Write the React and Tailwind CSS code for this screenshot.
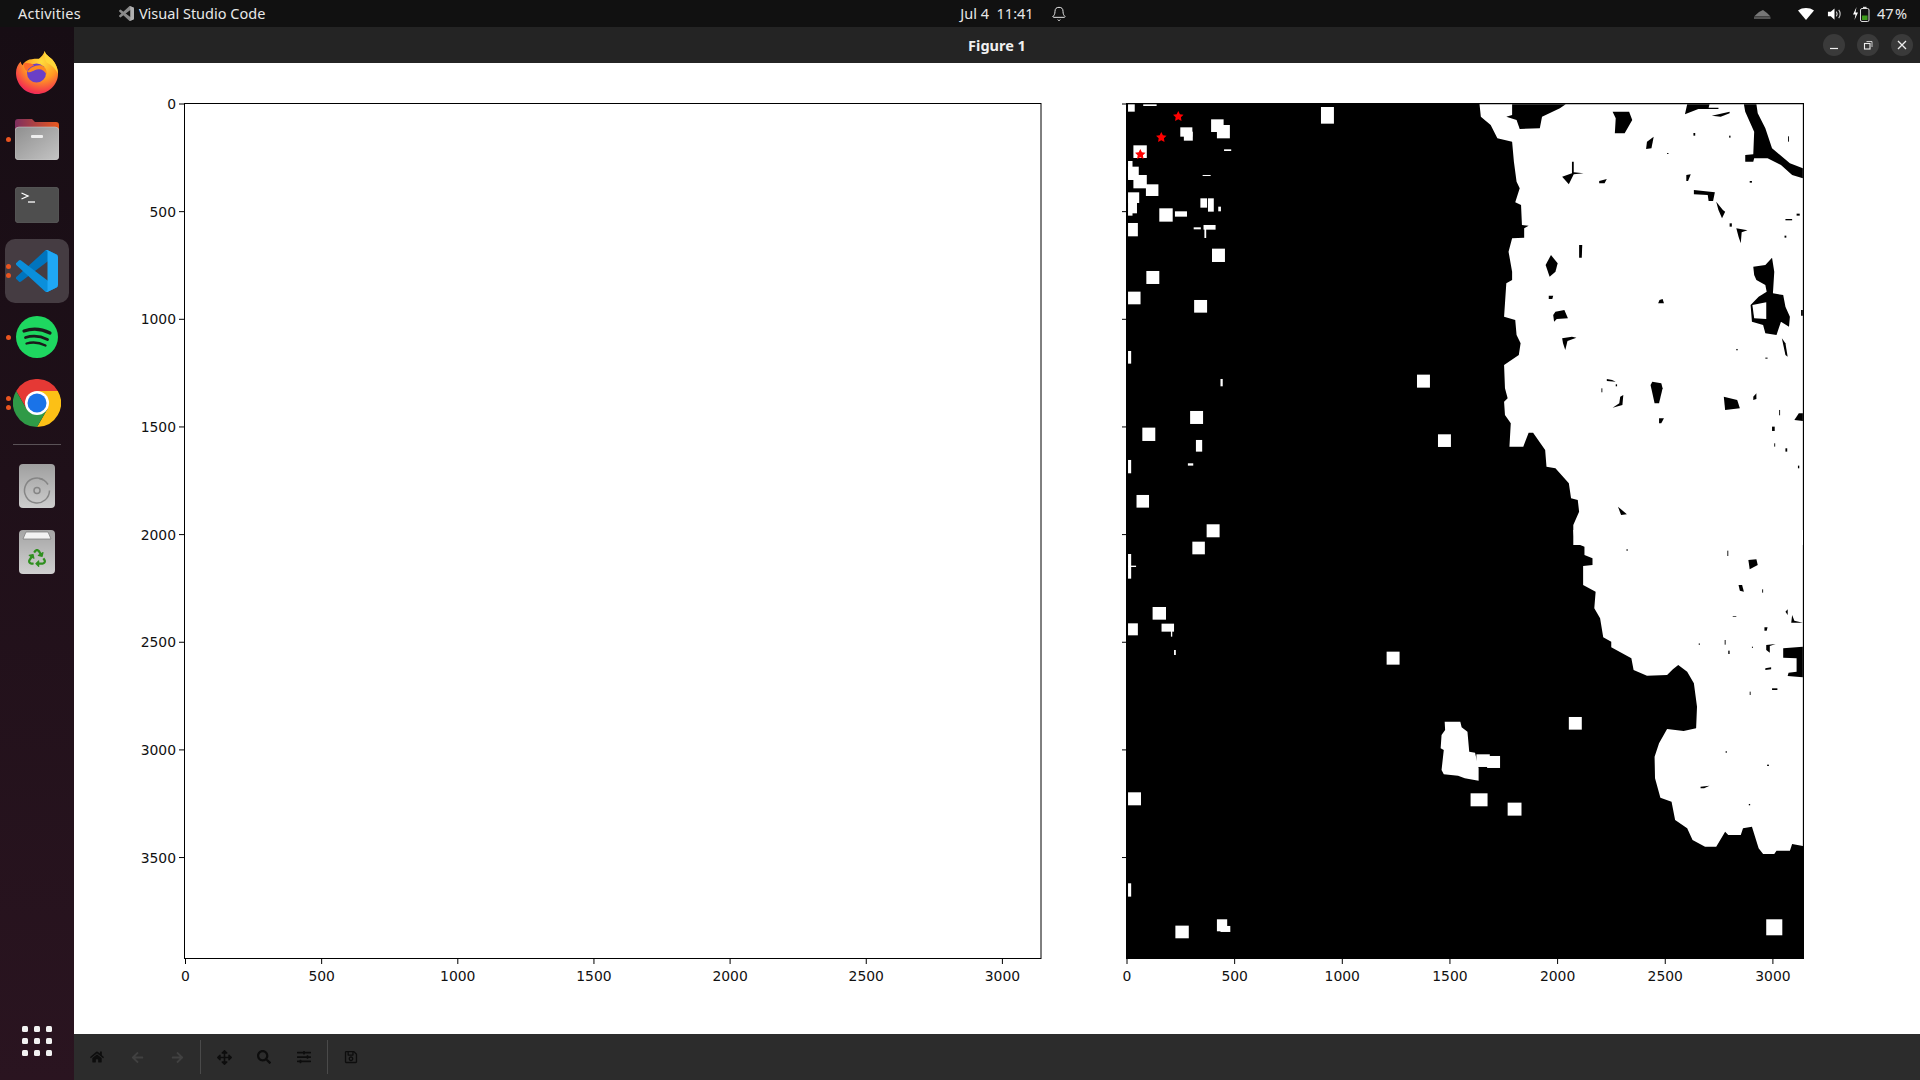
import { Bell } from "lucide-react";
import { FaArrowLeft, FaArrowRight, FaArrowsAlt, FaHome, FaRecycle, FaRegSave, FaSearch, FaSlidersH } from "react-icons/fa";

const yTicks = [0, 500, 1000, 1500, 2000, 2500, 3000, 3500];
const xTicks = [0, 500, 1000, 1500, 2000, 2500, 3000];

// upper half of the mask, traced in zoom coords
const upperLand = "805,28 808,65 830,90 845,130 878,140 882,200 888,260 895,280 885,322 898,330 900,390 915,392 905,400 905,428 878,430 870,470 878,530 878,555 865,565 860,665 885,675 888,720 897,745 893,780 860,810 862,880 868,910 860,920 862,960 875,985 872,1055 903,1055 915,1013 925,1013 952,1065 955,1115 975,1120 1005,1165 1010,1210 1025,1215 1028,1250 1015,1290 1015,1350 1529,1350 1529,28";
const upperHoles = [
  "878,28 998,28 985,40 945,65 940,100 895,102 888,75 865,65 878,60",
  "1103,50 1140,50 1147,75 1130,115 1108,115 1110,70",
  "1270,28 1320,28 1318,38 1340,38 1340,42 1295,42 1265,58",
  "1325,62 1365,50 1365,55 1345,65",
  "1397,28 1425,28 1428,55 1445,100 1460,160 1500,205 1529,220 1529,250 1505,240 1480,210 1450,190 1420,190 1418,200 1400,200 1400,180 1418,178 1420,110 1400,50",
  "1180,140 1195,125 1190,160 1178,162",
  "1012,200 1016,200 1016,232 1038,235 1016,238 1005,268 990,245 1012,235",
  "1073,258 1090,252 1085,265 1073,265",
  "1268,240 1278,238 1272,258 1268,258",
  "1285,285 1332,292 1328,318 1318,318 1316,300 1285,298",
  "1335,320 1350,345 1355,350 1348,370 1340,345",
  "1380,400 1405,406 1392,412 1390,445 1385,425",
  "1028,450 1035,450 1034,488 1028,488",
  "965,480 980,505 975,530 962,545 953,510",
  "960,602 970,602 968,612 960,612",
  "1208,615 1215,612 1218,625 1205,625",
  "975,650 995,645 1003,670 978,672 972,680 970,660",
  "990,730 1012,725 1022,728 1002,738 997,765 992,745",
  "1482,730 1490,745 1495,785 1490,780",
  "1418,515 1445,510 1460,488 1465,530 1462,595 1485,600 1490,635 1500,665 1498,695 1480,680 1470,720 1445,715 1440,690 1415,680 1412,630 1430,605 1448,590 1445,570 1425,555 1420,540",
  "1525,645 1529,645 1529,662 1525,662",
  "1192,860 1212,865 1215,880 1207,925 1197,925 1188,870",
  "1352,905 1382,915 1388,940 1355,945",
  "1418,905 1425,895 1425,912 1418,915",
  "1510,975 1520,955 1529,955 1529,978",
  "1207,970 1218,970 1212,985 1207,985",
  "1120,905 1127,900 1125,930 1103,938 1118,925",
  "1090,852 1102,855 1110,860 1090,858",
  "1115,1235 1135,1258 1122,1260",
  "1445,1305 1462,1310 1460,1328 1450,1325",
  "1490,372 1505,372 1505,376 1490,376",
  "1515,356 1522,356 1522,362 1515,362",
  "1365,385 1370,385 1370,395 1365,395",
  "1460,995 1466,995 1466,1008 1460,1008",
  "1490,1060 1494,1060 1494,1070 1490,1070",
];
const upperSpecks = [
  [1284, 114, 4, 8], [1364, 122, 3, 6], [1496, 124, 2, 16], [1225, 174, 3, 3], [1410, 258, 5, 5], [1380, 762, 3, 4], [1445, 788, 5, 3],
  [1078, 880, 2, 12], [1110, 868, 3, 6], [1476, 945, 2, 16], [1465, 1045, 2, 10], [1518, 1112, 3, 8], [1488, 422, 4, 6],
];
const upperBlocks = [
  [18, 28, 15, 22], [52, 28, 30, 5], [450, 36, 29, 50], [204, 73, 28, 38], [217, 90, 29, 40], [135, 97, 27, 28], [143, 110, 20, 27],
  [30, 151, 30, 38], [233, 163, 16, 5], [185, 240, 18, 3], [18, 198, 10, 50], [18, 215, 24, 40], [30, 240, 30, 40], [58, 268, 28, 35],
  [18, 292, 25, 32], [18, 310, 20, 45], [18, 350, 10, 12], [180, 310, 15, 28], [197, 310, 13, 40], [220, 335, 6, 14], [88, 340, 30, 40],
  [123, 349, 27, 16], [165, 397, 16, 6], [187, 390, 27, 14], [189, 400, 4, 29], [18, 384, 22, 40], [206, 461, 29, 40], [59, 528, 29, 39],
  [18, 590, 28, 38], [166, 615, 29, 38], [18, 768, 7, 38], [225, 852, 5, 22], [665, 839, 29, 39], [157, 948, 29, 39], [50, 998, 29, 40],
  [712, 1018, 29, 38], [170, 1035, 14, 35], [152, 1105, 12, 7], [18, 1095, 7, 40], [37, 1200, 28, 38], [194, 1288, 29, 39],
];

const lowerLand = "1015,0 1018,38 1040,50 1040,75 1058,85 1058,105 1037,108 1037,165 1065,185 1062,235 1075,265 1082,322 1100,335 1100,352 1145,385 1150,420 1180,437 1225,435 1238,418 1250,405 1270,425 1285,460 1292,530 1290,595 1262,603 1225,597 1207,640 1197,680 1198,745 1210,803 1235,815 1243,870 1270,895 1282,930 1310,950 1335,950 1355,905 1362,915 1390,915 1395,895 1415,890 1430,955 1440,972 1465,972 1470,962 1500,962 1505,942 1529,948 1529,0";
const lowerHoles = [
  "1407,90 1425,88 1428,105 1410,118",
  "1385,165 1393,165 1397,185 1388,182",
  "1490,245 1495,238 1495,255",
  "1505,255 1510,272 1529,278 1503,278",
  "1443,292 1450,292 1448,302 1443,302",
  "1447,345 1468,342 1455,348 1455,368 1447,360",
  "1485,355 1529,350 1529,442 1495,438 1497,428 1515,425 1515,385 1485,383",
  "1460,475 1472,475 1472,480 1460,480",
  "1300,770 1320,767 1308,775 1300,775",
  "1445,415 1458,412 1458,418 1445,420",
];
const lowerSpecks = [
  [1134, 58, 3, 4], [1360, 62, 2, 16], [1438, 178, 2, 10], [1372, 258, 8, 2], [1354, 330, 2, 14], [1362, 362, 3, 10], [1415, 350, 2, 4],
  [1296, 340, 2, 5], [1410, 485, 2, 10], [1356, 664, 3, 4], [1449, 704, 4, 4], [1408, 822, 3, 4],
];
const lowerBlob = "727,575 762,575 765,592 778,605 782,665 795,668 803,715 803,752 772,745 757,737 725,733 720,720 725,660 718,655 720,615 728,600";
const lowerBlocks = [
  [18, 72, 7, 74], [18, 107, 18, 4], [162, 35, 28, 38], [73, 231, 30, 38], [18, 280, 22, 36], [93, 281, 28, 24], [114, 300, 3, 20],
  [121, 360, 4, 15], [597, 365, 29, 39], [1005, 561, 29, 38], [798, 673, 30, 38], [822, 678, 29, 36], [785, 790, 38, 39], [868, 818, 31, 39],
  [18, 787, 29, 39], [18, 1060, 7, 40], [124, 1187, 30, 38], [217, 1168, 23, 36], [225, 1188, 22, 18], [1447, 1168, 36, 48],
];

const starPoints = (cx, cy, r) => {
  const pts = [];
  for (let i = 0; i < 10; i++) {
    const rad = i % 2 === 0 ? r : r * 0.5;
    const a = -Math.PI / 2 + (i * Math.PI) / 5;
    pts.push(`${cx + rad * Math.cos(a)},${cy + rad * Math.sin(a)}`);
  }
  return pts.join(" ");
};

function Plots() {
  return (
    <svg viewBox="74 63 1846 971" className="block w-full flex-1 bg-white" style={{ fontFamily: '"DejaVu Sans", sans-serif' }}>
      {/* left axes, empty */}
      <rect x="184.5" y="103.5" width="856.5" height="855" fill="white" stroke="black" strokeWidth="1" />
      {yTicks.map((v) => {
        const y = 104 + v * 0.2153;
        return (
          <g key={v}>
            <line x1="179" x2="184" y1={y} y2={y} stroke="black" />
            <text x="176" y={y} textAnchor="end" dominantBaseline="central" fontSize="13.9" fill="#111">{v}</text>
          </g>
        );
      })}
      {xTicks.map((v) => {
        const x = 185.5 + v * 0.2723;
        return (
          <g key={v}>
            <line x1={x} x2={x} y1="959" y2="964" stroke="black" />
            <text x={x} y="975.5" textAnchor="middle" dominantBaseline="central" fontSize="13.9" fill="#111">{v}</text>
          </g>
        );
      })}

      {/* right axes, mask */}
      <rect x="1127" y="104" width="676" height="854" fill="black" />
      <g transform="translate(1120 95) scale(0.4466 0.3333)">
        <polygon points={upperLand} fill="white" />
        {upperHoles.map((p) => <polygon key={p} points={p} fill="black" />)}
        {upperSpecks.map(([x, y, w, h]) => <rect key={`${x}-${y}`} x={x} y={y} width={w} height={h} fill="black" />)}
        <polygon points="1416,630 1447,622 1447,672 1420,670" fill="white" />
        {upperBlocks.map(([x, y, w, h]) => <rect key={`${x}-${y}`} x={x} y={y} width={w} height={h} fill="white" />)}
      </g>
      <g transform="translate(1120 530) scale(0.4466 0.3333)">
        <polygon points={lowerLand} fill="white" />
        {lowerHoles.map((p) => <polygon key={p} points={p} fill="black" />)}
        {lowerSpecks.map(([x, y, w, h]) => <rect key={`${x}-${y}`} x={x} y={y} width={w} height={h} fill="black" />)}
        <polygon points={lowerBlob} fill="white" />
        {lowerBlocks.map(([x, y, w, h]) => <rect key={`${x}-${y}`} x={x} y={y} width={w} height={h} fill="white" />)}
      </g>
      <polygon points={starPoints(1178.3, 116.5, 5.5)} fill="#ff0000" />
      <polygon points={starPoints(1161.3, 137.5, 5.5)} fill="#ff0000" />
      <polygon points={starPoints(1140.3, 154.5, 5.5)} fill="#ff0000" />
      <rect x="1126.5" y="103.5" width="677" height="855" fill="none" stroke="black" strokeWidth="1" />
      {yTicks.map((v) => {
        const y = 104 + v * 0.2153;
        return <line key={v} x1="1122" x2="1126" y1={y} y2={y} stroke="black" />;
      })}
      {xTicks.map((v) => {
        const x = 1127 + v * 0.2153;
        return (
          <g key={v}>
            <line x1={x} x2={x} y1="959" y2="964" stroke="black" />
            <text x={x} y="975.5" textAnchor="middle" dominantBaseline="central" fontSize="13.9" fill="#111">{v}</text>
          </g>
        );
      })}
    </svg>
  );
}

const VsCodeMono = () => (
  <svg viewBox="0 0 100 100" width="15" height="15" fill="#8a8a8a">
    <path d="M96.46 10.8 75.86.87a6.23 6.23 0 0 0-7.1 1.2L1.3 63.6a4.16 4.16 0 0 0 0 6.16l5.5 5a4.17 4.17 0 0 0 5.32.24L93.3 13.4a4.14 4.14 0 0 1 6.7 3.3v-.24a6.25 6.25 0 0 0-3.54-5.66Z" />
    <path d="M96.46 89.2 75.86 99.13a6.23 6.23 0 0 1-7.1-1.2L1.3 36.4a4.16 4.16 0 0 1 0-6.16l5.5-5a4.17 4.17 0 0 1 5.32-.24L93.3 86.6a4.14 4.14 0 0 0 6.7-3.3v.24a6.25 6.25 0 0 1-3.54 5.66Z" />
    <path d="M75.86 99.13a6.23 6.23 0 0 1-7.1-1.2c2.3 2.3 6.24.67 6.24-2.58V4.65c0-3.25-3.94-4.88-6.24-2.58a6.23 6.23 0 0 1 7.1-1.2l20.6 9.9A6.25 6.25 0 0 1 100 16.4v67.2a6.25 6.25 0 0 1-3.54 5.63Z" fill="#b0b0b0" />
  </svg>
);

function TopBar() {
  return (
    <div className="flex h-[27px] shrink-0 items-center bg-[#111111] text-[14.5px] text-[#e8e8e8]" style={{ fontFamily: '"Noto Sans", sans-serif' }}>
      <span className="ml-[18px] tracking-[0.25px]">Activities</span>
      <span className="ml-[38px] flex items-center gap-[5px]">
        <VsCodeMono />
        Visual Studio Code
      </span>
      <span className="ml-[695px] flex items-center">
        <span className="w-[72px] whitespace-nowrap">Jul 4&nbsp; 11:41</span>
        <Bell size={16} strokeWidth={1.5} className="ml-[19px]" />
      </span>
      <span className="ml-auto flex items-center">
        <svg viewBox="0 0 18 10" width="18" height="10">
          <path d="M1 7.5 6 3l4-2 4 3 3.5 3.5Z" fill="#777" />
          <path d="M1 8.5h16.5V9.5H1Z" fill="#999" />
        </svg>
        <svg viewBox="0 0 16 12" width="16" height="12" className="ml-[27px]">
          <path d="M0 2.5C4.5-.8 11.5-.8 16 2.5L8 12Z" fill="white" />
        </svg>
        <svg viewBox="0 0 16 14" width="15" height="14" className="ml-[13px]">
          <path d="M1 4.5h3L8 1v12L4 9.5H1Z" fill="white" />
          <path d="M10 4.5c1 1.5 1 3.500 0 5M12.500 2.500c2 2.500 2 6.500 0 9" fill="none" stroke="#ccc" strokeWidth="1.200" />
        </svg>
        <svg viewBox="0 0 20 16" width="20" height="16" className="ml-[10px]">
          <path d="M4.500 1 1 8.500h2.500L2.500 14 6 6.500H3.500Z" fill="white" />
          <rect x="8.500" y="2.500" width="8.500" height="13" rx="1.500" fill="none" stroke="#ddd" />
          <rect x="11" y="0.800" width="3.500" height="1.700" fill="#ddd" />
          <rect x="10" y="9.500" width="5.500" height="4.500" fill="#3f9b1c" />
        </svg>
        <span className="mr-[13px] ml-[5px] [word-spacing:-2.5px]">47 %</span>
      </span>
    </div>
  );
}

const Firefox = () => (
  <svg viewBox="0 0 44 46" width="42" height="44" className="relative top-[-1px]">
    <defs>
      <radialGradient id="ffBody" cx="0.6" cy="0.25" r="0.9">
        <stop offset="0" stopColor="#ffdd3c" />
        <stop offset="0.45" stopColor="#ff9a22" />
        <stop offset="0.8" stopColor="#f4334e" />
        <stop offset="1" stopColor="#e31587" />
      </radialGradient>
    </defs>
    <path d="M30 1c1 4 4 5 8 9 5 6 6 11 6 15 0 11-10 21-22 21C10 46 0 36 0 24c0-5 2-9 5-12 0 2 1 3 2 4 1-3 4-5 7-6 3-1 8-1 10-1 3-2 5-5 6-8Z" fill="url(#ffBody)" />
    <path d="M30 1c1 4 4 5 8 9 4 5 6 10 6 15-2-5-6-9-12-12-2-4-3-8-2-12Z" fill="#ffd83a" />
    <circle cx="21.500" cy="24" r="10" fill="#6a3fc7" />
    <path d="M12 23c3-6 10-7 14-7 4 1 7 5 6 10-2-5-7-7-12-5-2 1-5 3-8 2Z" fill="#ff8a1f" />
    <path d="M8 14c4-1 8 0 11 2-3 1-5 3-8 6-2-2-3-5-3-8Z" fill="#ff6a2b" />
  </svg>
);

const Files = () => (
  <svg viewBox="0 0 44 41" width="44" height="41">
    <defs>
      <linearGradient id="fBack" x1="0" x2="1">
        <stop offset="0" stopColor="#7e2f5f" />
        <stop offset="1" stopColor="#e9591f" />
      </linearGradient>
      <linearGradient id="fFront" x1="0" x2="1" y1="0" y2="1">
        <stop offset="0" stopColor="#8f8f8f" />
        <stop offset="1" stopColor="#c4c4c4" />
      </linearGradient>
    </defs>
    <path d="M0 3a3 3 0 0 1 3-3h14l3 3h21a3 3 0 0 1 3 3v14H0Z" fill="url(#fBack)" />
    <rect x="0" y="8" width="44" height="33" rx="4" fill="url(#fFront)" stroke="#d2d2d2" strokeWidth="0.500" />
    <rect x="16" y="16" width="12" height="3" rx="1" fill="#eeeeee" />
  </svg>
);

const Terminal = () => (
  <svg viewBox="0 0 44 36" width="44" height="36">
    <rect x="0" y="0" width="44" height="36" rx="4" fill="#4e4e4e" stroke="#666" strokeWidth="0.500" />
    <path d="M6.500 6 13 9l-6.500 3" fill="none" stroke="white" strokeWidth="1.300" />
    <path d="M13 15h7" stroke="white" strokeWidth="1.300" />
  </svg>
);

const VsCode = () => (
  <svg viewBox="0 0 100 100" width="42" height="42">
    <path d="M96.46 10.8 75.86.87a6.23 6.23 0 0 0-7.1 1.2L1.3 63.6a4.16 4.16 0 0 0 0 6.16l5.5 5a4.17 4.17 0 0 0 5.32.24L93.3 13.4a4.14 4.14 0 0 1 6.7 3.3v-.24a6.25 6.25 0 0 0-3.54-5.66Z" fill="#0074bd" />
    <path d="M96.46 89.2 75.86 99.13a6.23 6.23 0 0 1-7.1-1.2L1.3 36.4a4.16 4.16 0 0 1 0-6.16l5.5-5a4.17 4.17 0 0 1 5.32-.24L93.3 86.6a4.14 4.14 0 0 0 6.7-3.3v.24a6.25 6.25 0 0 1-3.54 5.66Z" fill="#0a8fdb" />
    <path d="M75.86 99.13a6.23 6.23 0 0 1-7.1-1.2c2.3 2.3 6.24.67 6.24-2.58V4.65c0-3.25-3.94-4.88-6.24-2.58a6.23 6.23 0 0 1 7.1-1.2l20.6 9.9A6.25 6.25 0 0 1 100 16.4v67.2a6.25 6.25 0 0 1-3.54 5.63Z" fill="#1fa8f5" />
  </svg>
);

const Spotify = () => (
  <svg viewBox="0 0 42 42" width="42" height="42">
    <circle cx="21" cy="21" r="21" fill="#1ed760" />
    <path d="M8 15c9-3 18-2 26 2" fill="none" stroke="#1b1b1b" strokeWidth="3.200" strokeLinecap="round" />
    <path d="M9.500 21.500c8-2.500 15-1.500 22 2" fill="none" stroke="#1b1b1b" strokeWidth="2.800" strokeLinecap="round" />
    <path d="M10.500 27.500c7-2 13-1 19 2" fill="none" stroke="#1b1b1b" strokeWidth="2.300" strokeLinecap="round" />
  </svg>
);

const Chrome = () => (
  <svg viewBox="-24 -24 48 48" width="48" height="48">
    <path d="M-20.800-12A24 24 0 0 1 20.800-12L0-12-10.400 6Z" fill="#e53935" />
    <path d="M20.800-12A24 24 0 0 1 0 24L10.400 6 0-12Z" fill="#fcc016" />
    <path d="M0 24A24 24 0 0 1-20.800-12L-10.400 6H10.400Z" fill="#2f9a47" />
    <circle r="12" fill="white" />
    <circle r="9.500" fill="#1a73e8" />
  </svg>
);

const Disc = () => (
  <svg viewBox="0 0 36 44" width="36" height="44">
    <defs>
      <linearGradient id="dTile" x1="0" x2="0" y1="0" y2="1">
        <stop offset="0" stopColor="#9f9f9f" />
        <stop offset="1" stopColor="#cdcdcd" />
      </linearGradient>
    </defs>
    <rect x="0" y="0" width="36" height="44" rx="4" fill="url(#dTile)" />
    <path d="M24 15.500A12.500 12.500 0 1 0 30.500 26.500" fill="none" stroke="#858585" strokeWidth="1.500" />
    <path d="M20 14.500a13 13 0 0 1 9 6" fill="none" stroke="#858585" strokeWidth="1.500" />
    <circle cx="18" cy="26.500" r="3" fill="none" stroke="#858585" strokeWidth="1.500" />
  </svg>
);

const Trash = () => (
  <div className="relative h-[44px] w-[36px] rounded-[4px] bg-gradient-to-b from-[#a5a5a5] to-[#d0d0d0]">
    <svg viewBox="0 0 36 10" width="36" height="10" className="absolute top-0 left-0">
      <path d="M4 9 7 2h22l3 7Z" fill="#f2f2f2" stroke="#777" strokeWidth="0.700" />
    </svg>
    <FaRecycle size={18} color="#2f8f1f" className="absolute top-[19px] left-[9px]" />
  </div>
);

function DockItem({ dots = 0, active, children }) {
  return (
    <div className="relative flex h-[66px] w-full items-center justify-center">
      {active && <div className="absolute top-px left-[5px] h-[64px] w-[64px] rounded-[10px] bg-[#453c42]" />}
      {dots > 0 && (
        <div className="absolute top-0 left-[5.500px] flex h-full flex-col justify-center gap-[4px]">
          {Array.from({ length: dots }).map((_, i) => (
            <span key={i} className="block h-[5px] w-[5px] rounded-full bg-[#e95420]" />
          ))}
        </div>
      )}
      <div className="relative flex items-center justify-center">{children}</div>
    </div>
  );
}

function Dock() {
  return (
    <div className="flex w-[74px] shrink-0 flex-col items-center bg-gradient-to-b from-[#170d14] to-[#2a1420] pt-[13px]">
      <DockItem><Firefox /></DockItem>
      <DockItem dots={1}><Files /></DockItem>
      <DockItem><Terminal /></DockItem>
      <DockItem dots={2} active><VsCode /></DockItem>
      <DockItem dots={1}><Spotify /></DockItem>
      <DockItem dots={2}><Chrome /></DockItem>
      <div className="mt-[8px] mb-[8px] h-px w-[48px] bg-[#5a5257]" />
      <DockItem><Disc /></DockItem>
      <DockItem><Trash /></DockItem>
      <div className="mt-auto mb-[24px] grid grid-cols-3 gap-[6px]">
        {Array.from({ length: 9 }).map((_, i) => (
          <span key={i} className="block h-[6px] w-[6px] rounded-[1.500px] bg-[#f2f2f2]" />
        ))}
      </div>
    </div>
  );
}

function WinButton({ children }) {
  return <div className="flex h-[22px] w-[22px] items-center justify-center rounded-full bg-[#3a3a3a]">{children}</div>;
}

function TitleBar() {
  return (
    <div className="relative flex h-[36px] shrink-0 items-center justify-center bg-[#242424] pt-px">
      <span className="text-[14.5px] font-bold text-[#f0f0f0]" style={{ fontFamily: '"Noto Sans", sans-serif' }}>Figure 1</span>
      <div className="absolute top-[7px] right-[7px] flex gap-[12px]">
        <WinButton>
          <svg viewBox="0 0 12 12" width="12" height="12"><path d="M2 9.500h8" stroke="#eee" strokeWidth="1.200" /></svg>
        </WinButton>
        <WinButton>
          <svg viewBox="0 0 12 12" width="12" height="12" fill="none" stroke="#eee" strokeWidth="1.100">
            <rect x="2.500" y="4.500" width="5.500" height="5.500" />
            <path d="M4.500 2.500h5.500V8" strokeWidth="0.800" />
          </svg>
        </WinButton>
        <WinButton>
          <svg viewBox="0 0 12 12" width="12" height="12"><path d="M2 2l8 8M10 2l-8 8" stroke="#eee" strokeWidth="1.300" /></svg>
        </WinButton>
      </div>
    </div>
  );
}

const ToolBtn = ({ children }) => <div className="flex h-full w-[40px] items-center justify-center">{children}</div>;
const ToolSep = () => <div className="mx-[3px] h-[34px] w-px bg-[#4a4a4a]" />;

function Toolbar() {
  return (
    <div className="flex h-[46px] shrink-0 items-center bg-[#2c2c2c] pl-[3px] text-[#0d0d0d]">
      <ToolBtn><FaHome size={14} /></ToolBtn>
      <ToolBtn><FaArrowLeft size={13} color="#414141" /></ToolBtn>
      <ToolBtn><FaArrowRight size={13} color="#414141" /></ToolBtn>
      <ToolSep />
      <ToolBtn><FaArrowsAlt size={15} /></ToolBtn>
      <ToolBtn><FaSearch size={14} /></ToolBtn>
      <ToolBtn><FaSlidersH size={14} /></ToolBtn>
      <ToolSep />
      <ToolBtn><FaRegSave size={14} /></ToolBtn>
    </div>
  );
}

export default function App() {
  return (
    <div className="flex h-screen w-screen flex-col overflow-hidden bg-black">
      <TopBar />
      <div className="flex min-h-0 flex-1">
        <Dock />
        <div className="flex min-w-0 flex-1 flex-col">
          <TitleBar />
          <Plots />
          <Toolbar />
        </div>
      </div>
    </div>
  );
}
